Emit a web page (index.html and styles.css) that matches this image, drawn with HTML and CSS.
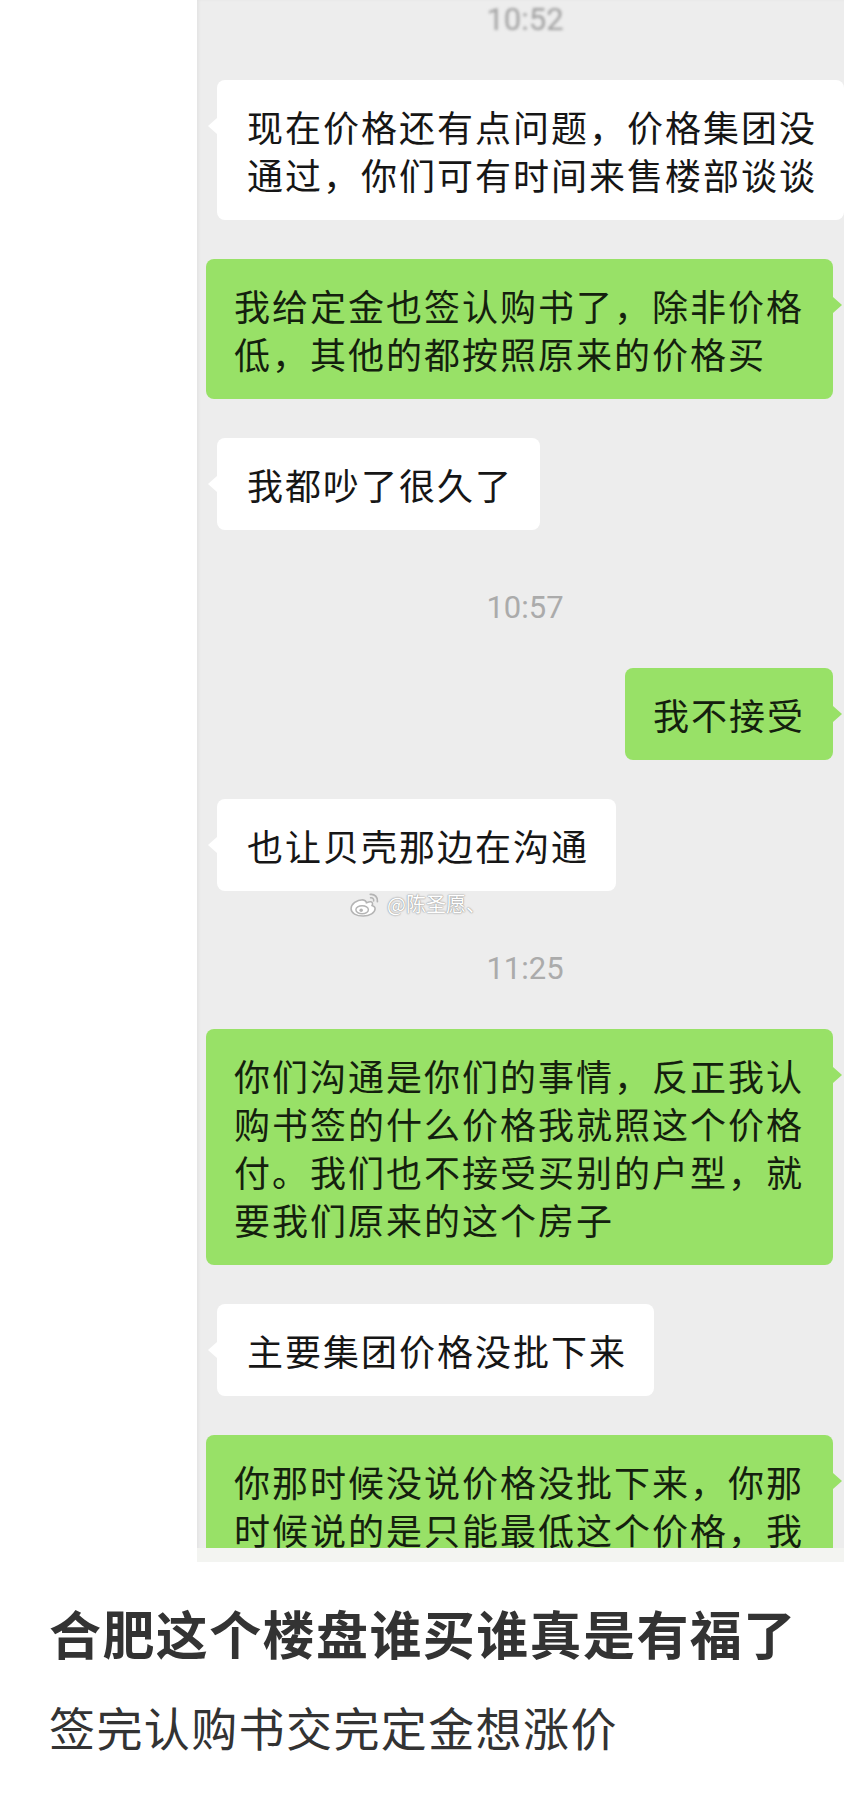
FILE: index.html
```html
<!DOCTYPE html>
<html lang="zh-CN">
<head>
    <meta charset="UTF-8">
    <meta name="viewport" content="width=device-width, initial-scale=1.0">
    <title>合肥这个楼盘谁买谁真是有福了</title>
    <link rel="stylesheet" href="styles.css">
</head>
<body>
    <div class="chat">
        <div class="time blurred">10:52</div>
        <div class="row">
            <div class="bubble them">现在价格还有点问题，价格集团没通过，你们可有时间来售楼部谈谈</div>
        </div>
        <div class="row me">
            <div class="bubble mine">我给定金也签认购书了，除非价格低，其他的都按照原来的价格买</div>
        </div>
        <div class="row">
            <div class="bubble them">我都吵了很久了</div>
        </div>

        <div class="time">10:57</div>
        <div class="row me">
            <div class="bubble mine">我不接受</div>
        </div>
        <div class="row">
            <div class="bubble them">也让贝壳那边在沟通</div>
        </div>

        <div class="watermark">
            <svg class="weibo-logo" viewBox="0 0 32 26" width="31" height="25">
                <path d="M13 8c-6 0-12 4.5-12 9.5C1 22 6.5 25 13.5 25S26 21.5 26 17.5c0-2.2-1.8-3-3.2-3.4 1-1.8.6-3.6-1.4-3.9-1.5-.2-3.4.6-4.4 1-.2-1.8-1.4-2.7-4-3.2z" fill="#fff" stroke="#b4b4b4" stroke-width="1.6"/>
                <ellipse cx="12.5" cy="18.5" rx="6.5" ry="4.2" fill="none" stroke="#b4b4b4" stroke-width="1.5"/>
                <circle cx="11.5" cy="19" r="1.8" fill="#b4b4b4"/>
                <path d="M21 2.5c4.5-.6 8 3 7.4 7.5" fill="none" stroke="#b4b4b4" stroke-width="1.8" stroke-linecap="round"/>
                <path d="M21.3 6c2-.3 3.6 1.3 3.2 3.3" fill="none" stroke="#b4b4b4" stroke-width="1.6" stroke-linecap="round"/>
            </svg>
            <span>@陈圣愿、</span>
        </div>

        <div class="time">11:25</div>
        <div class="row me">
            <div class="bubble mine">你们沟通是你们的事情，反正我认购书签的什么价格我就照这个价格付。我们也不接受买别的户型，就要我们原来的这个房子</div>
        </div>
        <div class="row">
            <div class="bubble them">主要集团价格没批下来</div>
        </div>
        <div class="row me">
            <div class="bubble mine">你那时候没说价格没批下来，你那时候说的是只能最低这个价格，我</div>
        </div>
    </div>

    <div class="caption">
        <h1>合肥这个楼盘谁买谁真是有福了</h1>
        <p>签完认购书交完定金想涨价</p>
    </div>
</body>
</html>
```

FILE: styles.css
```css
body {
    margin: 0;
    background: #fff;
    font-family: "Noto Sans CJK SC", "Noto Sans", sans-serif;
}

.chat {
    position: relative;
    margin-left: 197px;
    width: 647px;
    height: 1562px;
    overflow: hidden;
    background: #ededed;
    box-shadow: inset 2px 0 3px rgba(0, 0, 0, 0.04);
}

/* washed out strip where the screenshot was cut */
.chat::after {
    content: '';
    position: absolute;
    left: 0;
    right: 0;
    bottom: 0;
    height: 14px;
    background: #f3f4f1;
}

.time {
    margin-top: 58px;
    padding-left: 9px;
    height: 40px;
    line-height: 40px;
    text-align: center;
    font-family: Roboto, "Liberation Sans", sans-serif;
    font-size: 31px;
    color: #ababab;
}

.time:first-child {
    margin-top: 0;
}

.blurred {
    filter: blur(1.4px);
    color: #a0a0a0;
}

.row {
    display: flex;
    margin-top: 39px;
}

.time + .row {
    margin-top: 40px;
}

.row.me {
    justify-content: flex-end;
}

.bubble {
    position: relative;
    box-sizing: border-box;
    padding: 22px 28px;
    border-radius: 8px;
    font-size: 36px;
    letter-spacing: 2px;
    line-height: 48px;
    color: #161616;
}

.them {
    margin-left: 20px;
    padding-left: 30px;
    padding-right: 27px;
    max-width: 628px;
    background: #fff;
}

.mine {
    margin-right: 11px;
    max-width: 627px;
    background: #98e167;
    color: #14200e;
}

.them::before,
.mine::before {
    content: '';
    position: absolute;
    top: 38px;
    border-top: 8px solid transparent;
    border-bottom: 8px solid transparent;
}

.them::before {
    left: -9px;
    border-right: 9px solid #fff;
}

.mine::before {
    right: -9px;
    border-left: 9px solid #98e167;
}

.watermark {
    position: absolute;
    left: 153px;
    top: 891px;
    display: flex;
    align-items: center;
    gap: 6px;
    font-size: 20px;
    line-height: 26px;
    color: #fff;
    text-shadow: 0 0 1px #888, 0 0 2px rgba(0, 0, 0, 0.35);
}

.weibo-logo {
    display: block;
}

.caption {
    padding: 39px 0 0 49px;
    color: #333;
}

.caption h1 {
    margin: 0;
    font-size: 52px;
    line-height: 64px;
    font-weight: 700;
    letter-spacing: 1.4px;
}

.caption p {
    margin: 31px 0 0;
    font-size: 46px;
    line-height: 60px;
    letter-spacing: 1.4px;
}
```
